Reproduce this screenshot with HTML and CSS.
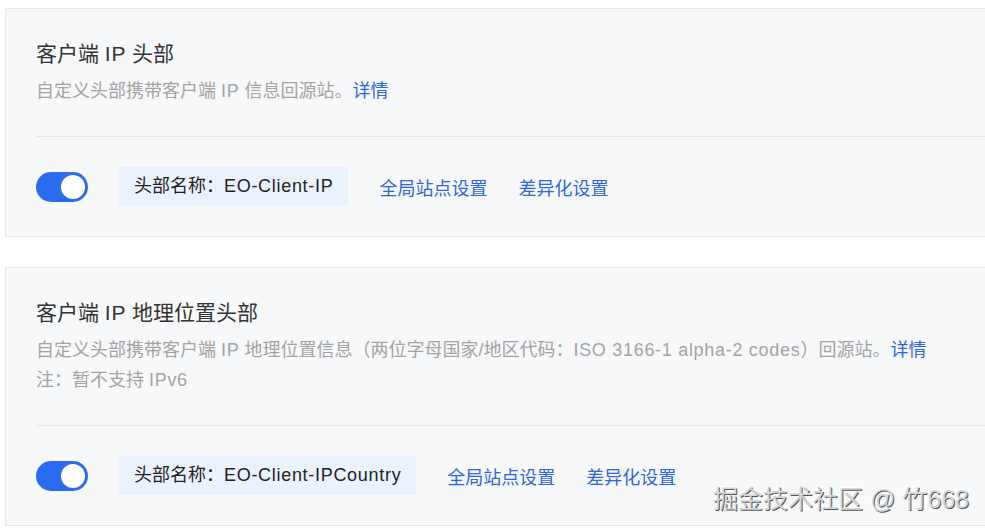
FILE: index.html
```html
<!DOCTYPE html>
<html lang="zh-CN">
<head>
  <meta charset="UTF-8">
  <title>客户端 IP 头部</title>
  <link rel="stylesheet" href="styles.css">
</head>
<body>

  <div class="page">

    <div class="card">
      <div class="card-head">
        <div class="card-title">客户端 <span class="en">IP</span> 头部</div>
        <div class="card-desc">自定义头部携带客户端 <span class="en">IP</span> 信息回源站。<a class="link" href="#">详情</a></div>
      </div>
      <div class="card-row">
        <span class="switch is-on"><span class="knob"></span></span>
        <span class="tag">头部名称：<span class="en">EO-Client-IP</span></span>
        <a class="link" href="#">全局站点设置</a>
        <a class="link" href="#">差异化设置</a>
      </div>
    </div>

    <div class="card">
      <div class="card-head">
        <div class="card-title">客户端 <span class="en">IP</span> 地理位置头部</div>
        <div class="card-desc">自定义头部携带客户端 <span class="en">IP</span> 地理位置信息（两位字母国家/地区代码：<span class="en">ISO 3166-1 alpha-2 codes</span>）回源站。<a class="link" href="#">详情</a></div>
        <div class="card-desc">注：暂不支持 <span class="en">IPv6</span></div>
      </div>
      <div class="card-row">
        <span class="switch is-on"><span class="knob"></span></span>
        <span class="tag">头部名称：<span class="en">EO-Client-IPCountry</span></span>
        <a class="link" href="#">全局站点设置</a>
        <a class="link" href="#">差异化设置</a>
      </div>
    </div>

    <div class="watermark">掘金技术社区 @ 竹668</div>
  </div>

</body>
</html>
```

FILE: styles.css
```css
body {
  margin: 0;
  background: #ffffff;
  font-family: "Liberation Sans", "Noto Sans CJK SC", sans-serif;
  font-size: 18px;
  color: #222;
  overflow: hidden;
}

.page {
  position: relative;
  padding: 8px 0 0 5px;
  height: 524px;
}

.en {
  letter-spacing: 0.7px;
}

.card {
  width: 1000px;
  background: #f7f8fa;
  border: 1px solid #e6e7ea;
  margin-bottom: 30px;
}

.card-head {
  margin-left: 30px;
  padding: 30px 0 30px;
  border-bottom: 1px solid #e6e7ea;
}

.card-title {
  font-size: 21px;
  line-height: 30px;
  color: #333;
}

.card-title + .card-desc {
  margin-top: 7px;
}

.card-desc {
  line-height: 30px;
  color: #a3a3a3;
}

.link {
  color: #2d66dd;
  text-decoration: none;
}

.card-row {
  display: flex;
  align-items: center;
  gap: 31px;
  padding: 30px 0 30px 30px;
}

.switch {
  display: inline-flex;
  justify-content: flex-end;
  align-items: center;
  width: 52px;
  height: 30px;
  box-sizing: border-box;
  padding: 3px;
  border-radius: 15px;
  background: #2a6bf0;
}

.knob {
  width: 24px;
  height: 24px;
  border-radius: 50%;
  background: #fff;
}

.tag {
  display: inline-block;
  line-height: 39px;
  padding: 0 15px;
  background: #eaf2fd;
  color: #222;
}

.watermark {
  position: absolute;
  right: 16px;
  bottom: 17px;
  font-size: 25px;
  color: #d6d6d6;
  text-shadow: 1px 1px 0 #555, -1px -1px 0 #fff;
}
```
